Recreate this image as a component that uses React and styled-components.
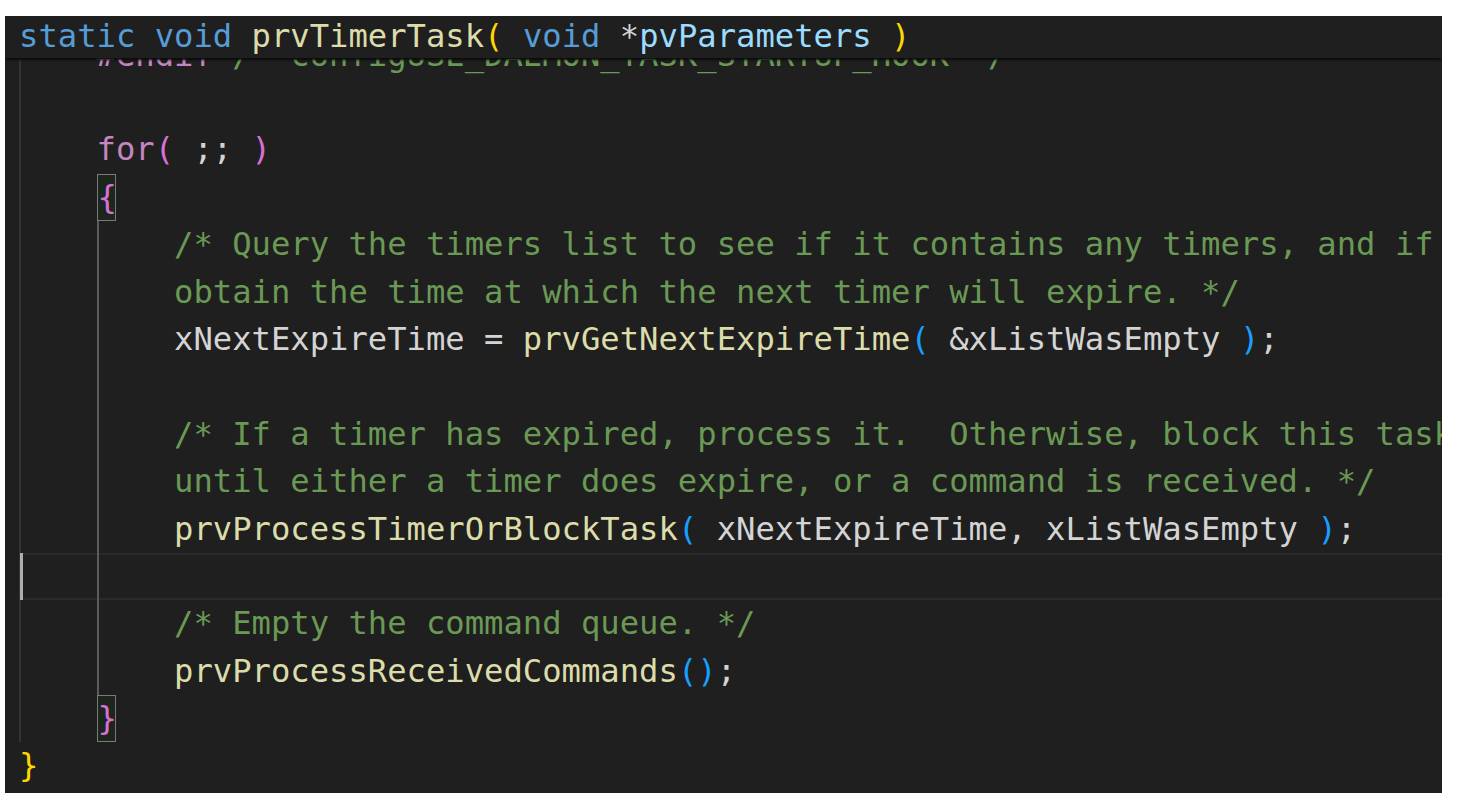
import React from "react";
import styled, { createGlobalStyle } from "styled-components";

const CHAR_W = 19.4;
const LINE_H = 47.4;
const TEXT_X = 14;

const GlobalStyle = createGlobalStyle`
  html, body {
    margin: 0;
    padding: 0;
    background: #ffffff;
  }
`;

const Page = styled.div`
  width: 1457px;
  height: 805px;
  background: #ffffff;
  padding: 16px 0 0 5px;
  box-sizing: border-box;
`;

const Editor = styled.div`
  position: relative;
  width: 1437px;
  height: 777px;
  overflow: hidden;
  background: #1f1f1f;
  font-family: "DejaVu Sans Mono", "Liberation Mono", monospace;
  font-size: 32.2px;
  color: #d4d4d4;
`;

const StickyHeader = styled.div`
  position: absolute;
  top: 0;
  left: 0;
  right: 0;
  z-index: 2;
  height: 42px;
  line-height: 41px;
  padding-left: ${TEXT_X}px;
  background: #1f1f1f;
  white-space: pre;
  box-shadow: 0 3px 2px -1px #0b0b0b;
`;

const Code = styled.div`
  padding-top: 15.6px;
`;

const Line = styled.div`
  position: relative;
  height: ${LINE_H}px;
  line-height: ${LINE_H}px;
  padding-left: ${TEXT_X}px;
  white-space: pre;
`;

const Guide = styled.span`
  position: absolute;
  top: 0;
  bottom: 0;
  width: 2px;
  background: ${(p) => (p.$active ? "#5c5c5c" : "#333333")};
`;

const CurrentLine = styled.div`
  position: absolute;
  top: 0;
  bottom: 0;
  left: ${TEXT_X + 2}px;
  right: 0;
  border-top: 2px solid #2a2a2a;
  border-bottom: 2px solid #2a2a2a;
  box-sizing: border-box;
`;

const Cursor = styled.span`
  position: absolute;
  top: 0;
  bottom: 0;
  left: ${TEXT_X + 1}px;
  width: 3px;
  background: #aeafad;
`;

const Tok = styled.span`
  position: relative;
  color: ${(p) => p.$color};
`;

const BracketBox = styled.span`
  position: relative;
  display: inline-block;
  vertical-align: top;
  box-sizing: border-box;
  width: ${CHAR_W}px;
  height: ${LINE_H}px;
  line-height: ${LINE_H - 2}px;
  border: 1.5px solid #7a7a7a;
  background: #1c261c;
  color: ${(p) => p.$color};
`;

const colors = {
  kw: "#569cd6",
  fn: "#dcdcaa",
  param: "#9cdcfe",
  txt: "#d4d4d4",
  ctrl: "#c586c0",
  cm: "#6a9955",
  b1: "#ffd700",
  b2: "#da70d6",
  b3: "#179fff",
};

const header = [
  ["kw", "static void "],
  ["fn", "prvTimerTask"],
  ["b1", "("],
  ["txt", " "],
  ["kw", "void "],
  ["txt", "*"],
  ["param", "pvParameters"],
  ["txt", " "],
  ["b1", ")"],
];

const lines = [
  { guides: [0], toks: [["txt", "    "], ["ctrl", "#endif"], ["cm", " /* configUSE_DAEMON_TASK_STARTUP_HOOK */"]] },
  { guides: [0], toks: [] },
  { guides: [0], toks: [["txt", "    "], ["ctrl", "for"], ["b2", "("], ["txt", " ;; "], ["b2", ")"]] },
  { guides: [0], toks: [["txt", "    "], ["box", "{", "b2"]] },
  { guides: [0, 4], toks: [["txt", "        "], ["cm", "/* Query the timers list to see if it contains any timers, and if so,"]] },
  { guides: [0, 4], toks: [["txt", "        "], ["cm", "obtain the time at which the next timer will expire. */"]] },
  {
    guides: [0, 4],
    toks: [
      ["txt", "        xNextExpireTime = "],
      ["fn", "prvGetNextExpireTime"],
      ["b3", "("],
      ["txt", " &xListWasEmpty "],
      ["b3", ")"],
      ["txt", ";"],
    ],
  },
  { guides: [0, 4], toks: [] },
  { guides: [0, 4], toks: [["txt", "        "], ["cm", "/* If a timer has expired, process it.  Otherwise, block this task"]] },
  { guides: [0, 4], toks: [["txt", "        "], ["cm", "until either a timer does expire, or a command is received. */"]] },
  {
    guides: [0, 4],
    toks: [
      ["txt", "        "],
      ["fn", "prvProcessTimerOrBlockTask"],
      ["b3", "("],
      ["txt", " xNextExpireTime, xListWasEmpty "],
      ["b3", ")"],
      ["txt", ";"],
    ],
  },
  { guides: [0, 4], toks: [], current: true },
  { guides: [0, 4], toks: [["txt", "        "], ["cm", "/* Empty the command queue. */"]] },
  {
    guides: [0, 4],
    toks: [["txt", "        "], ["fn", "prvProcessReceivedCommands"], ["b3", "()"], ["txt", ";"]],
  },
  { guides: [0], toks: [["txt", "    "], ["box", "}", "b2"]] },
  { guides: [], toks: [["b1", "}"]] },
];

const renderToks = (toks) =>
  toks.map((t, i) =>
    t[0] === "box" ? (
      <BracketBox key={i} $color={colors[t[2]]}>
        {t[1]}
      </BracketBox>
    ) : (
      <Tok key={i} $color={colors[t[0]]}>
        {t[1]}
      </Tok>
    )
  );

const App = () => {
  return (
    <Page>
      <GlobalStyle />
      <Editor>
        <StickyHeader>{renderToks(header)}</StickyHeader>
        <Code>
          {lines.map((line, i) => (
            <Line key={i}>
              {line.current && <CurrentLine />}
              {line.guides.map((col) => (
                <Guide
                  key={col}
                  $active={col === 4}
                  style={{ left: TEXT_X + col * CHAR_W }}
                />
              ))}
              {line.current && <Cursor />}
              {renderToks(line.toks)}
            </Line>
          ))}
        </Code>
      </Editor>
    </Page>
  );
};

export default App;
